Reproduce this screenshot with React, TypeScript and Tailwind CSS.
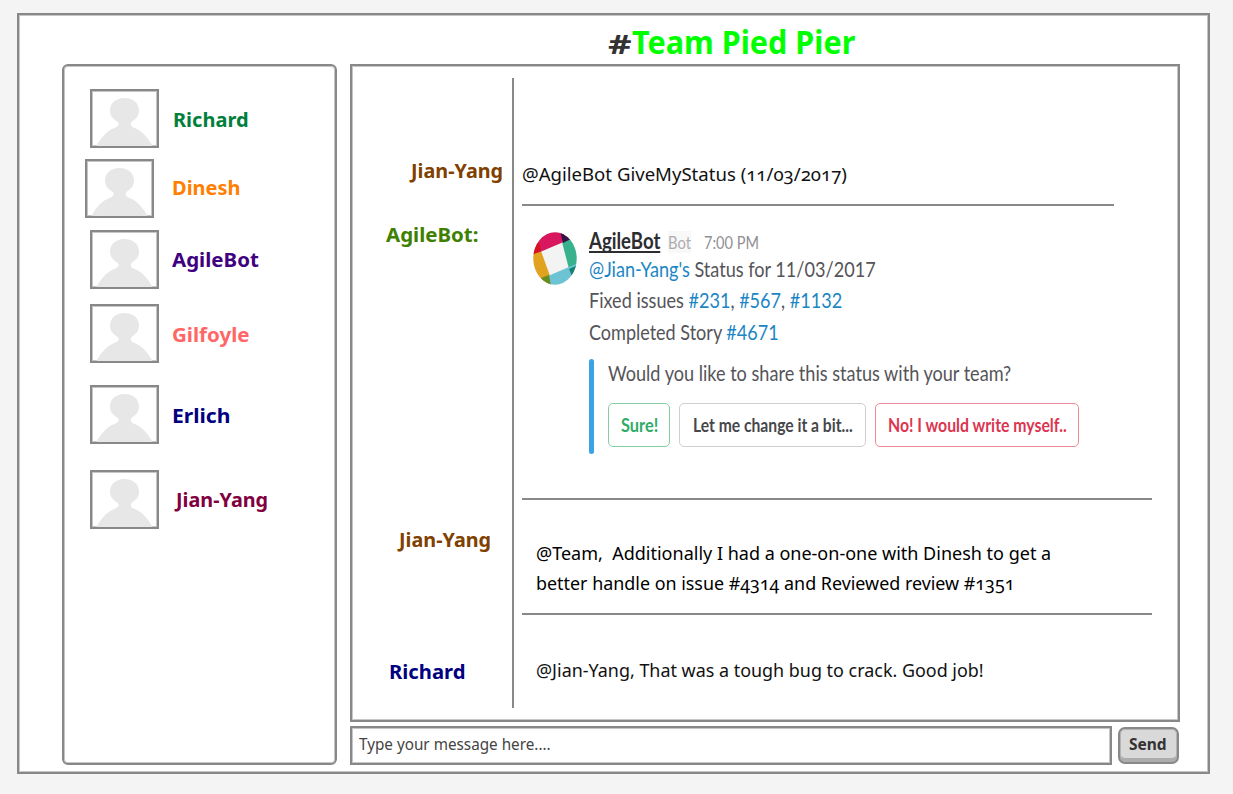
import { useLayoutEffect, useRef, type ReactNode } from "react";

/** A single line of text, stretched horizontally to fill its box. */
function Line({ className = "", children }: { className?: string; children: ReactNode }) {
  const box = useRef<HTMLDivElement>(null);
  const ink = useRef<HTMLSpanElement>(null);
  useLayoutEffect(() => {
    if (box.current && ink.current) {
      const ratio = box.current.clientWidth / ink.current.offsetWidth;
      ink.current.style.transform = `scaleX(${ratio})`;
    }
  }, []);
  return (
    <div ref={box} className={`shrink-0 ${className}`}>
      <span ref={ink} className="inline-block origin-left whitespace-pre align-top">
        {children}
      </span>
    </div>
  );
}

function Avatar() {
  return (
    <svg viewBox="0 0 69 59" className="h-[59px] w-[69px] shrink-0">
      <rect x="2.5" y="2.5" width="64" height="54" fill="#fff" stroke="#c6c6c6" />
      <path
        d="M34.5 9C43 9 49 14 49 21.5C49 27 46 30 42 32.5C40 34 40.5 37 43 38.2C51 41 58 48 62.5 57H6.5C11 48 18 41 26 38.2C29 37 29.5 34 27 32.5C23 30 20 27 20 21.5C20 14 26 9 34.5 9Z"
        fill="#e7e7e7"
      />
      <rect x="1" y="1" width="67" height="57" fill="none" stroke="#888" strokeWidth="2" />
    </svg>
  );
}

const contacts = [
  { name: "Richard", row: "ml-[26px] mt-[23px]", text: "ml-[14px] mt-[19px] w-[76px] text-[#00803c]" },
  { name: "Dinesh", row: "ml-[21px] mt-[11px]", text: "ml-[18px] mt-[17px] w-[69px] text-[#ff8000]" },
  { name: "AgileBot", row: "ml-[26px] mt-3", text: "ml-[13px] mt-[18px] w-[87px] text-[#400080]" },
  { name: "Gilfoyle", row: "ml-[26px] mt-[15px]", text: "ml-[13px] mt-[19px] w-[78px] text-[#ff6666]" },
  { name: "Erlich", row: "ml-[26px] mt-[22px]", text: "ml-[13px] mt-[19px] w-[58px] text-[#000080]" },
  { name: "Jian-Yang", row: "ml-[26px] mt-[26px]", text: "ml-[17px] mt-[18px] w-[92px] text-[#800040]" },
];

function BotLogo() {
  return (
    <svg viewBox="0 0 44 53" className="h-[53px] w-11 shrink-0">
      <defs>
        <clipPath id="disc">
          <ellipse cx="22" cy="26.5" rx="21.7" ry="26.2" />
        </clipPath>
      </defs>
      <g clipPath="url(#disc)">
        <rect width="44" height="53" fill="#f3f3f3" />
        <path d="M-2 22L8 19L17 44L18 55H-2Z" fill="#e0a21f" />
        <path d="M-2 22V-2H30L33 9L7 20Z" fill="#d8175f" />
        <path d="M29 10L45 3V36L36 37Z" fill="#38b28c" />
        <path d="M15 44L43 32V54H14Z" fill="#6bc3d3" />
        <path d="M-1 15L6 10L8 19L-1 23Z" fill="#d41221" />
        <path d="M27 -1L40 4L38 7L30 11Z" fill="#371445" />
        <path d="M36 37L45 33L39 44Z" fill="#158070" />
        <path d="M8 46L16 43L18 54H10Z" fill="#688c20" />
      </g>
    </svg>
  );
}

function Link({ children }: { children: ReactNode }) {
  return <span className="text-[#1c86c4]">{children}</span>;
}

function BotMessage() {
  return (
    <div className="ml-[11px] mt-[21px] flex font-['Lato',sans-serif] text-[22px] leading-7 text-[#555459]">
      <div className="mt-[5px]">
        <BotLogo />
      </div>
      <div className="ml-[12px]">
        <div className="flex">
          <Line className="w-[71px] font-bold text-[#2c2d30]">
            <span className="underline decoration-2 underline-offset-2 [text-decoration-skip-ink:none]">AgileBot</span>
          </Line>
          <Line className="ml-2 w-[23px] text-lg leading-[30px] text-[#adadb0]">
            <span className="bg-[#f8f8f8]">Bot</span>
          </Line>
          <Line className="ml-[13px] w-[55px] text-lg leading-[30px] text-[#909094]">7:00 PM</Line>
        </div>
        <Line className="-mt-[2px] w-[287px]">
          <Link>@Jian-Yang's</Link> Status for 11/03/2017
        </Line>
        <Line className="mt-[3px] w-[253px]">
          Fixed issues <Link>#231</Link>, <Link>#567</Link>, <Link>#1132</Link>
        </Line>
        <Line className="mt-[4px] w-[190px]">
          Completed Story <Link>#4671</Link>
        </Line>
        <div className="mt-[13px] flex h-[95px]">
          <div className="w-[5px] rounded-full bg-[#3aa3e3]" />
          <div className="ml-[14px]">
            <Line className="w-[403px]">Would you like to share this status with your team?</Line>
            <div className="mt-4 flex text-[19px] font-bold leading-[42px]">
              <button className="flex h-11 w-[62px] items-start justify-center rounded-[5px] border border-[#85cfa3] text-[#2fac66]">
                <Line className="w-[37px] text-left">Sure!</Line>
              </button>
              <button className="ml-[9px] flex h-11 w-[187px] items-start rounded-[5px] border border-[#cfcfd0] pl-[13px] text-[#46474b]">
                <Line className="w-[160px] text-left">Let me change it a bit...</Line>
              </button>
              <button className="ml-[9px] flex h-11 w-[204px] items-start rounded-[5px] border border-[#ee8a98] pl-[12px] text-[#dc3550]">
                <Line className="w-[179px] text-left">No! I would write myself..</Line>
              </button>
            </div>
          </div>
        </div>
      </div>
    </div>
  );
}

export default function App() {
  return (
    <div className="h-[794px] w-[1233px] overflow-hidden bg-[#f4f4f4] pl-[17px] pt-[13px] font-['Noto_Sans',sans-serif]">
      <main className="h-[761px] w-[1193px] border-2 border-[#888] bg-white shadow-[inset_0_0_0_1px_#c6c6c6]">
        <header className="flex h-[49px] pl-[589px] font-bold">
          <Line className="mt-[9px] w-[23px] text-[27px] leading-10 text-[#333]">#</Line>
          <Line className="ml-px mt-[7px] w-[223px] text-[31.5px] leading-10 text-[#00ff00]">Team Pied Pier</Line>
        </header>

        <div className="flex pl-[43px]">
          <aside className="h-[701px] w-[275px] rounded-md border-2 border-[#888] text-xl font-bold leading-6 shadow-[inset_0_0_0_1px_#c6c6c6]">
            {contacts.map((c) => (
              <div key={c.name} className={`flex ${c.row}`}>
                <Avatar />
                <Line className={c.text}>{c.name}</Line>
              </div>
            ))}
          </aside>

          <section className="ml-[13px] w-[830px]">
            <div className="flex h-[658px] border-2 border-[#888] shadow-[inset_0_0_0_1px_#c6c6c6]">
              <div className="w-[160px] text-xl font-bold leading-6">
                <Line className="ml-[59px] mt-[93px] w-[92px] text-[#804000]">Jian-Yang</Line>
                <Line className="ml-[34px] mt-10 w-[92px] text-[#408000]">AgileBot:</Line>
                <Line className="ml-[47px] mt-[281px] w-[92px] text-[#804000]">Jian-Yang</Line>
                <Line className="ml-[37px] mt-[108px] w-[77px] text-[#000080]">Richard</Line>
              </div>
              <div className="mt-3 h-[630px] w-[2px] bg-[#888]" />
              <div className="ml-2 w-[640px] text-[18px] leading-[30px] text-[#111] [font-variant-numeric:oldstyle-nums]">
                <Line className="mt-[93px] w-[325px]">@AgileBot GiveMyStatus (11/03/2017)</Line>
                <div className="mt-[15px] h-[2px] w-[592px] bg-[#888]" />
                <div className="h-[292px] [font-variant-numeric:normal]">
                  <div className="flow-root">
                    <BotMessage />
                  </div>
                </div>
                <div className="h-[2px] w-[630px] bg-[#888]" />
                <div className="ml-[14px] pt-[38px] text-black">
                  <Line className="w-[515px]">{"@Team,  Additionally I had a one-on-one with Dinesh to get a"}</Line>
                  <Line className="w-[478px]">better handle on issue #4314 and Reviewed review #1351</Line>
                </div>
                <div className="mt-[15px] h-[2px] w-[630px] bg-[#888]" />
                <Line className="ml-[14px] mt-10 w-[448px]">@Jian-Yang, That was a tough bug to crack. Good job!</Line>
              </div>
            </div>

            <div className="mt-1 flex">
              <div className="h-[39px] w-[762px] border-2 border-[#888] pl-[7px] shadow-[inset_0_0_0_1px_#c6c6c6]">
                <Line className="mt-[2px] w-[192px] text-[15.5px] leading-7 text-[#444]">Type your message here....</Line>
              </div>
              <button className="ml-[6px] mt-px flex h-[37px] w-[61px] rounded-[7px] border-2 border-[#888] bg-[#d9d9d9] pl-[9px] shadow-[inset_0_-4px_0_#adadad,inset_0_0_0_1px_#b5b5b5]">
                <Line className="mt-px w-[38px] text-left text-[15.5px] font-bold leading-7 text-[#333]">Send</Line>
              </button>
            </div>
          </section>
        </div>
      </main>
    </div>
  );
}
